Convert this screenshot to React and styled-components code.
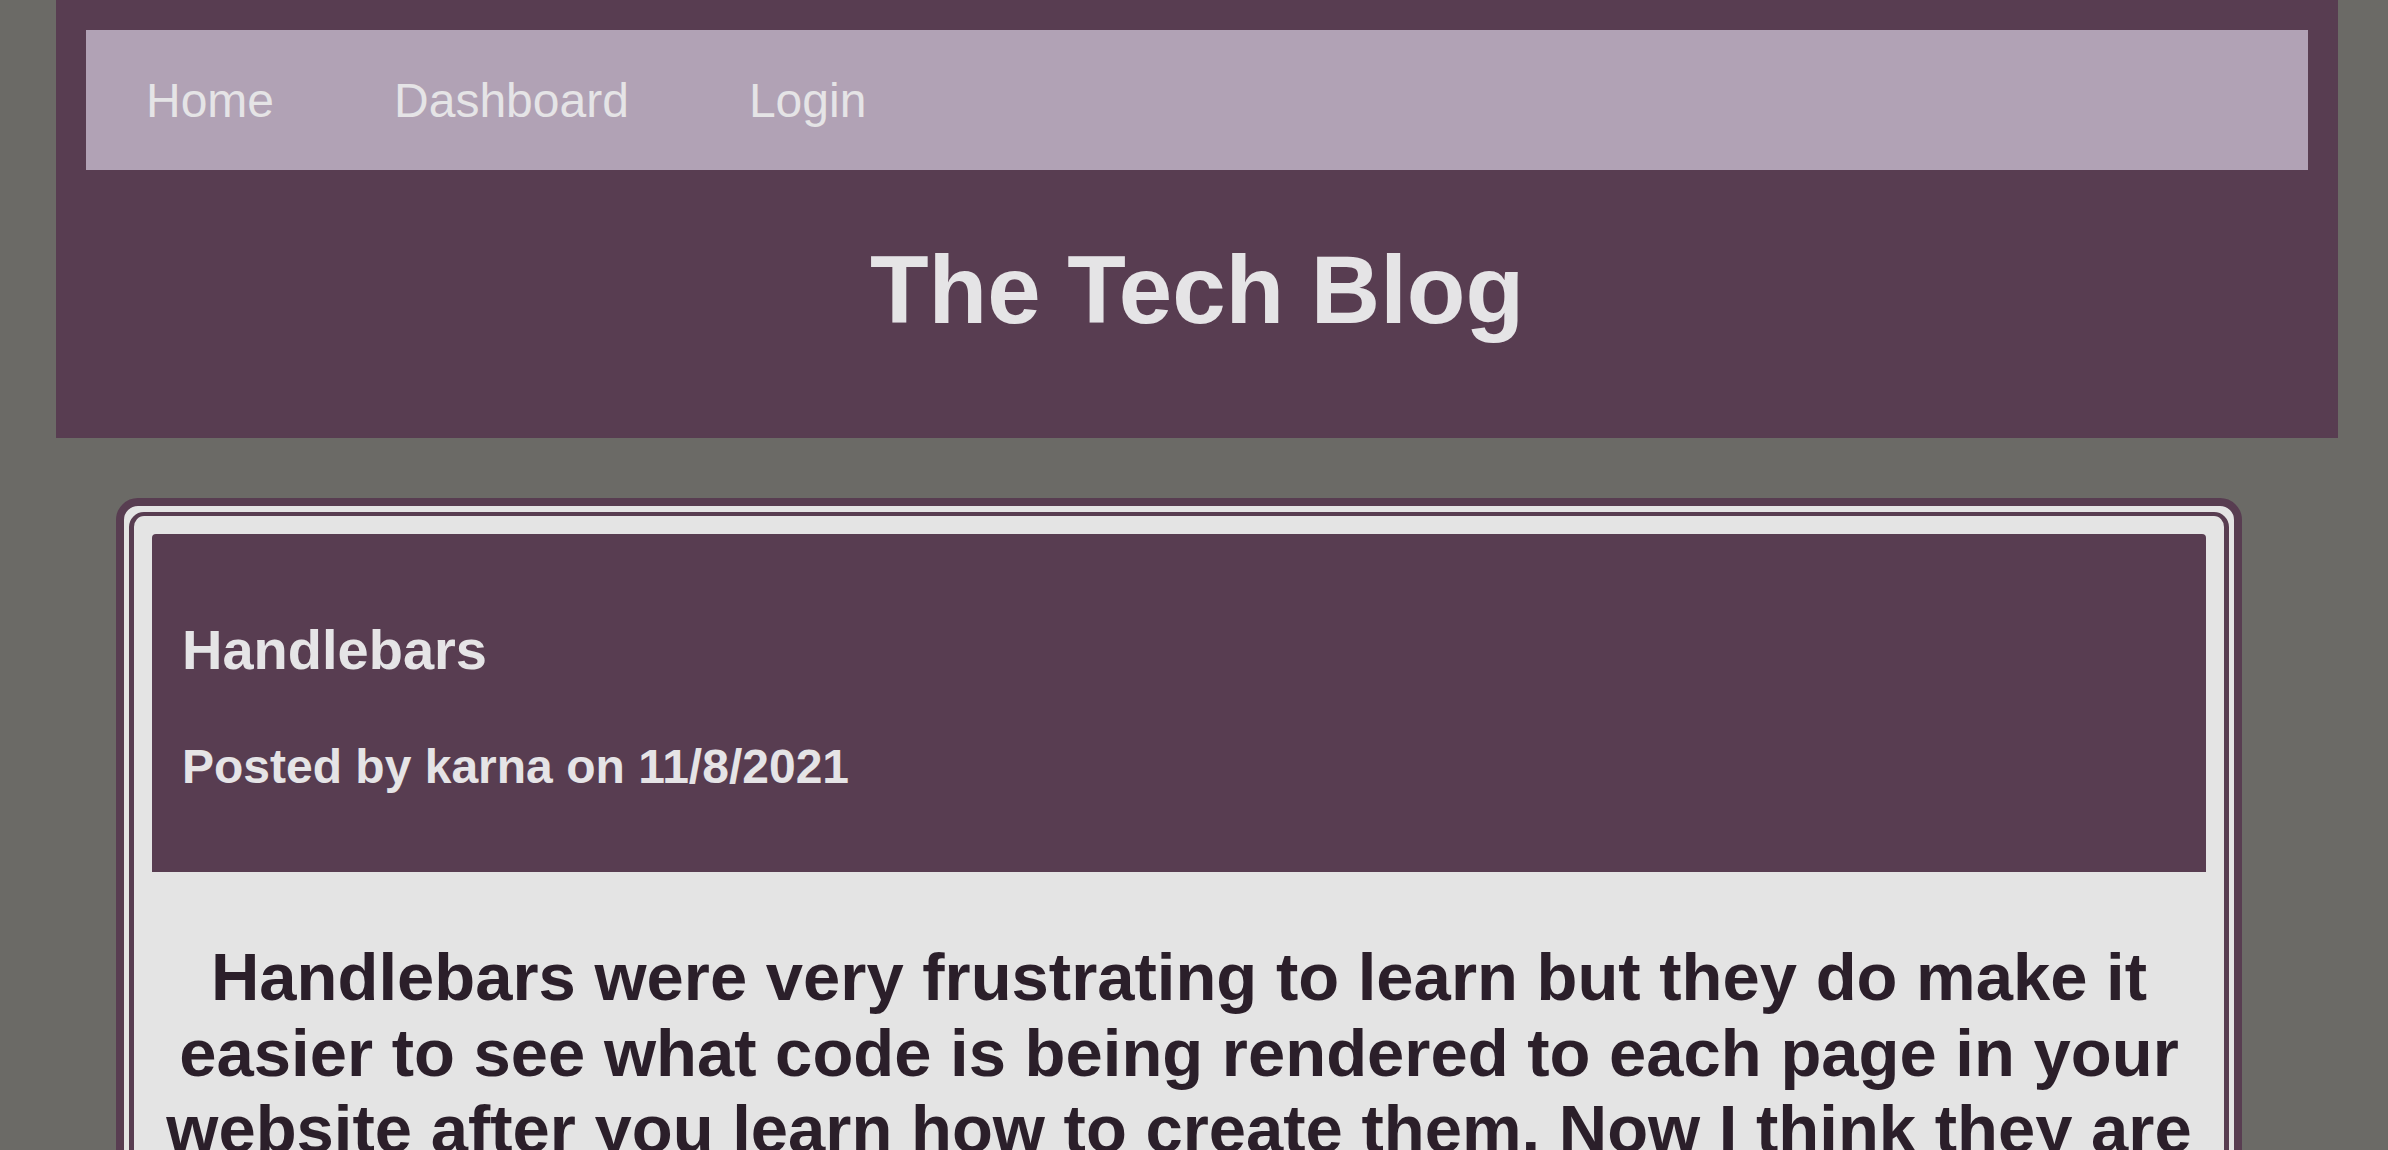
import React from "react";
import styled, { createGlobalStyle } from "styled-components";

const NAV_LINKS = ["Home", "Dashboard", "Login"];

const POST = {
  title: "Handlebars",
  author: "karna",
  date: "11/8/2021",
  body:
    "Handlebars were very frustrating to learn but they do make it easier to see what code is being rendered to each page in your website after you learn how to create them. Now I think they are really useful.",
};

const App = () => {
  return (
    <>
      <GlobalStyle />
      <Header>
        <NavBar>
          {NAV_LINKS.map((item) => (
            <NavLink key={item} href="#">
              {item}
            </NavLink>
          ))}
        </NavBar>
        <SiteTitle>The Tech Blog</SiteTitle>
      </Header>
      <Main>
        <PostCard>
          <PostFrame>
            <PostHeader>
              <PostTitle>{POST.title}</PostTitle>
              <PostMeta>
                Posted by {POST.author} on {POST.date}
              </PostMeta>
            </PostHeader>
            <PostBody>{POST.body}</PostBody>
          </PostFrame>
        </PostCard>
      </Main>
    </>
  );
};

const GlobalStyle = createGlobalStyle`
  body {
    margin: 0;
    background: #6b6a66;
    font-family: "Liberation Sans", Arial, sans-serif;
  }
`;

const Header = styled.header`
  display: flex;
  flex-direction: column;
  margin: 0 50px 0 56px;
  padding: 30px 30px 0;
  background: #583d51;
`;

const NavBar = styled.nav`
  display: flex;
  align-items: center;
  height: 140px;
  background: #b1a2b5;
`;

const NavLink = styled.a`
  padding: 0 60px;
  font-size: 48px;
  color: #e5e4e6;
  text-decoration: none;
  &:hover {
    cursor: pointer;
  }
`;

const SiteTitle = styled.h1`
  margin: 65px 0 93px;
  font-size: 96px;
  font-weight: 700;
  text-align: center;
  color: #e5e4e6;
`;

const Main = styled.main`
  display: flex;
  padding: 60px 146px 0 116px;
`;

const PostCard = styled.article`
  flex: 1;
  padding: 6px 5px 5px;
  border: 8px solid #583d51;
  border-radius: 22px;
  background: #e4e4e4;
`;

const PostFrame = styled.div`
  padding: 18px;
  border: 5px solid #583d51;
  border-top-width: 4px;
  border-radius: 15px;
  background: #e4e4e4;
`;

const PostHeader = styled.div`
  display: flex;
  flex-direction: column;
  gap: 57px;
  padding: 83px 30px 78px;
  border-radius: 4px 4px 0 0;
  background: #583d51;
  color: #e5e4e6;
`;

const PostTitle = styled.h2`
  margin: 0;
  font-size: 56px;
  font-weight: 700;
`;

const PostMeta = styled.h3`
  margin: 0;
  font-size: 48px;
  font-weight: 700;
`;

const PostBody = styled.p`
  margin: 67px 0 40px;
  font-size: 67px;
  line-height: 76px;
  font-weight: 700;
  text-align: center;
  color: #2b1f2a;
`;

export default App;
